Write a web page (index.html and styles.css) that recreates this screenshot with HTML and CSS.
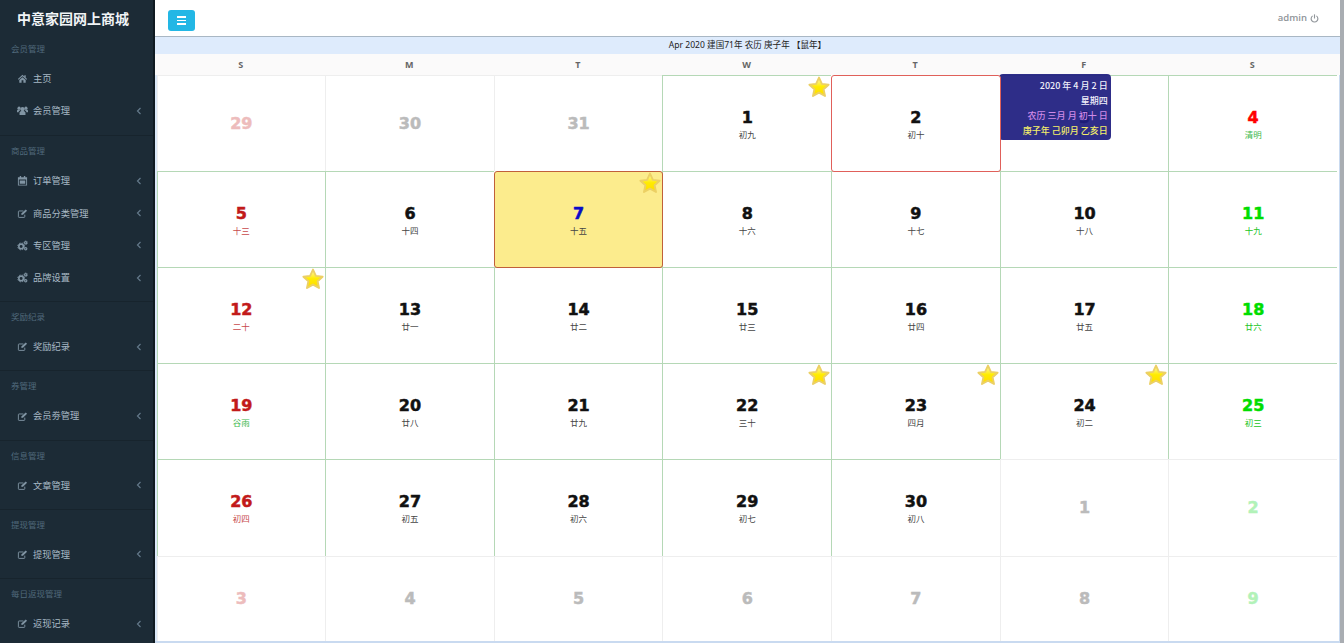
FILE: index.html
```html
<!DOCTYPE html>
<html lang="zh">
<head>
<meta charset="utf-8">
<title>中意家园网上商城</title>
<link rel="stylesheet" href="styles.css">
</head>
<body>
<svg class="defs" width="0" height="0" aria-hidden="true">
  <defs>
    <linearGradient id="gold" x1="0" y1="0" x2="0" y2="1">
      <stop offset="0" stop-color="#fff8b8"/>
      <stop offset="0.5" stop-color="#ffeb00"/>
      <stop offset="1" stop-color="#ffdc00"/>
    </linearGradient>
    <symbol id="i-star" viewBox="0 0 24 24"><path d="M12 2.600l2.900 6.300 6.700.8-5 4.600 1.400 6.700-6-3.400-6 3.400 1.400-6.700-5-4.600 6.700-.8z" fill="url(#gold)" stroke="#ecd064" stroke-width="1.900" stroke-linejoin="round"/></symbol>
    <symbol id="i-home" viewBox="0 0 24 24"><path d="M12 4L2 13l1.500 1.500L12 7l8.500 7.500L22 13l-3-2.700V5h-3v2.600zM5 15.500V21h5v-5h4v5h5v-5.500L12 9.200z" fill="currentColor"/></symbol>
    <symbol id="i-users" viewBox="0 0 24 24"><circle cx="12" cy="9" r="4.500" fill="currentColor"/><circle cx="4.500" cy="7" r="3.500" fill="currentColor"/><circle cx="19.500" cy="7" r="3.500" fill="currentColor"/><path d="M5.500 22v-5c0-3 2.500-4 6.500-4s6.500 1 6.500 4v5zM0 16v-3c0-2 1.500-3 5-3l2 2c-2.500 1-3.500 2-3.500 4zM24 16v-3c0-2-1.500-3-5-3l-2 2c2.500 1 3.500 2 3.500 4z" fill="currentColor"/></symbol>
    <symbol id="i-cal" viewBox="0 0 24 24"><path d="M2 5h20v18H2zM4 10v11h16V10z" fill="currentColor" fill-rule="evenodd"/><path d="M6 2h3v5H6zM15 2h3v5h-3zM6 12h12v7H6z" fill="currentColor"/></symbol>
    <symbol id="i-edit" viewBox="0 0 24 24"><path d="M17 14.500V19a1.500 1.500 0 0 1-1.500 1.500h-11A1.500 1.500 0 0 1 3 19V8a1.500 1.500 0 0 1 1.500-1.500H14" fill="none" stroke="currentColor" stroke-width="2"/><path d="M10 11.500L19 3l3 3-9 8.500-3.500.8z" fill="currentColor"/></symbol>
    <symbol id="i-cogs" viewBox="0 0 24 24"><circle cx="9" cy="14" r="5" fill="none" stroke="currentColor" stroke-width="3.500"/><circle cx="9" cy="14" r="7.500" fill="none" stroke="currentColor" stroke-width="2" stroke-dasharray="3 3"/><circle cx="19" cy="6" r="2.500" fill="none" stroke="currentColor" stroke-width="2.500"/><circle cx="19" cy="6" r="4.200" fill="none" stroke="currentColor" stroke-width="1.500" stroke-dasharray="2 2"/><circle cx="19" cy="19" r="2.500" fill="none" stroke="currentColor" stroke-width="2.500"/></symbol>
    <symbol id="i-left" viewBox="0 0 6 8"><path d="M4.500 1L1.500 4l3 3" fill="none" stroke="currentColor" stroke-width="1.200"/></symbol>
    <symbol id="i-power" viewBox="0 0 12 12"><path d="M3.500 2.500a4.500 4.500 0 1 0 5 0" fill="none" stroke="currentColor" stroke-width="1.500"/><path d="M6 .5v5.500" stroke="currentColor" stroke-width="1.500"/></symbol>
  </defs>
</svg>

<aside class="sidebar">
  <div class="brand">中意家园网上商城</div>
  <nav>
    <section class="group group-first">
      <h4>会员管理</h4>
      <a class="item"><svg class="ico"><use href="#i-home"/></svg><span>主页</span></a>
      <a class="item"><svg class="ico"><use href="#i-users"/></svg><span>会员管理</span><svg class="arrow"><use href="#i-left"/></svg></a>
    </section>
    <section class="group">
      <h4>商品管理</h4>
      <a class="item"><svg class="ico"><use href="#i-cal"/></svg><span>订单管理</span><svg class="arrow"><use href="#i-left"/></svg></a>
      <a class="item"><svg class="ico"><use href="#i-edit"/></svg><span>商品分类管理</span><svg class="arrow"><use href="#i-left"/></svg></a>
      <a class="item"><svg class="ico"><use href="#i-cogs"/></svg><span>专区管理</span><svg class="arrow"><use href="#i-left"/></svg></a>
      <a class="item"><svg class="ico"><use href="#i-cogs"/></svg><span>品牌设置</span><svg class="arrow"><use href="#i-left"/></svg></a>
    </section>
    <section class="group">
      <h4>奖励纪录</h4>
      <a class="item"><svg class="ico"><use href="#i-edit"/></svg><span>奖励纪录</span><svg class="arrow"><use href="#i-left"/></svg></a>
    </section>
    <section class="group">
      <h4>券管理</h4>
      <a class="item"><svg class="ico"><use href="#i-edit"/></svg><span>会员劵管理</span><svg class="arrow"><use href="#i-left"/></svg></a>
    </section>
    <section class="group">
      <h4>信息管理</h4>
      <a class="item"><svg class="ico"><use href="#i-edit"/></svg><span>文章管理</span><svg class="arrow"><use href="#i-left"/></svg></a>
    </section>
    <section class="group">
      <h4>提现管理</h4>
      <a class="item"><svg class="ico"><use href="#i-edit"/></svg><span>提现管理</span><svg class="arrow"><use href="#i-left"/></svg></a>
    </section>
    <section class="group">
      <h4>每日返现管理</h4>
      <a class="item"><svg class="ico"><use href="#i-edit"/></svg><span>返现记录</span><svg class="arrow"><use href="#i-left"/></svg></a>
    </section>
  </nav>
</aside>

<main class="main">
  <header class="topbar">
    <button class="toggle" type="button" aria-label="menu"><i></i><i></i><i></i></button>
    <div class="user"><span>admin</span><svg class="power"><use href="#i-power"/></svg></div>
  </header>
  <div class="calendar">
    <div class="cal-title">Apr 2020 建国71年 农历 庚子年 【鼠年】</div>
    <div class="weekdays"><div>S</div><div>M</div><div>T</div><div>W</div><div>T</div><div>F</div><div>S</div></div>
    <div class="days">
      <div class="day off"><b class="c-offsun">29</b></div>
      <div class="day off"><b>30</b></div>
      <div class="day off"><b>31</b></div>
      <div class="day"><b>1</b><small>初九</small><svg class="star"><use href="#i-star"/></svg></div>
      <div class="day hover"><b>2</b><small>初十</small></div>
      <div class="day"><b>3</b><small>十一</small>
        <div class="tip">
          <p>2020 年 4 月 2 日</p>
          <p>星期四</p>
          <p class="tip-lunar">农历 三月 月 初十 日</p>
          <p class="tip-gz">庚子年 己卯月 乙亥日</p>
        </div>
      </div>
      <div class="day"><b class="c-red">4</b><small class="c-term">清明</small></div>

      <div class="day"><b class="c-sun">5</b><small class="c-sun">十三</small></div>
      <div class="day"><b>6</b><small>十四</small></div>
      <div class="day today"><b>7</b><small>十五</small><svg class="star"><use href="#i-star"/></svg></div>
      <div class="day"><b>8</b><small>十六</small></div>
      <div class="day"><b>9</b><small>十七</small></div>
      <div class="day"><b>10</b><small>十八</small></div>
      <div class="day"><b class="c-sat">11</b><small class="c-sat">十九</small></div>

      <div class="day"><b class="c-sun">12</b><small class="c-sun">二十</small><svg class="star"><use href="#i-star"/></svg></div>
      <div class="day"><b>13</b><small>廿一</small></div>
      <div class="day"><b>14</b><small>廿二</small></div>
      <div class="day"><b>15</b><small>廿三</small></div>
      <div class="day"><b>16</b><small>廿四</small></div>
      <div class="day"><b>17</b><small>廿五</small></div>
      <div class="day"><b class="c-sat">18</b><small class="c-sat">廿六</small></div>

      <div class="day"><b class="c-sun">19</b><small class="c-term">谷雨</small></div>
      <div class="day"><b>20</b><small>廿八</small></div>
      <div class="day"><b>21</b><small>廿九</small></div>
      <div class="day"><b>22</b><small>三十</small><svg class="star"><use href="#i-star"/></svg></div>
      <div class="day"><b>23</b><small>四月</small><svg class="star"><use href="#i-star"/></svg></div>
      <div class="day"><b>24</b><small>初二</small><svg class="star"><use href="#i-star"/></svg></div>
      <div class="day"><b class="c-sat">25</b><small class="c-sat">初三</small></div>

      <div class="day"><b class="c-sun">26</b><small class="c-sun">初四</small></div>
      <div class="day"><b>27</b><small>初五</small></div>
      <div class="day"><b>28</b><small>初六</small></div>
      <div class="day"><b>29</b><small>初七</small></div>
      <div class="day"><b>30</b><small>初八</small></div>
      <div class="day off"><b>1</b></div>
      <div class="day off"><b class="c-offsat">2</b></div>

      <div class="day off"><b class="c-offsun">3</b></div>
      <div class="day off"><b>4</b></div>
      <div class="day off"><b>5</b></div>
      <div class="day off"><b>6</b></div>
      <div class="day off"><b>7</b></div>
      <div class="day off"><b>8</b></div>
      <div class="day off"><b class="c-offsat">9</b></div>
    </div>
  </div>
</main>
</body>
</html>
```
FILE: styles.css
```css
* { box-sizing: border-box; }
html, body { margin: 0; height: 100%; }
body {
  display: flex;
  height: 643px;
  overflow: hidden;
  background: #fff;
  font-family: "Open Sans", "Noto Sans CJK SC", sans-serif;
}
.defs { position: absolute; }

.sidebar {
  flex: 0 0 155px;
  height: 643px;
  overflow: hidden;
  background: #1c2b36;
  border-right: 2px solid #0f1a21;
}
.brand {
  height: 34px;
  padding: 8px 7px 0 0;
  text-align: center;
  font: 700 14px/20px "Noto Sans CJK SC", sans-serif;
  color: #f1f4f6;
}
.group {
  height: 69.2px;
  border-top: 1px solid #17242d;
}
.group:has(.item:nth-of-type(2)) { height: 101.4px; }
.group:has(.item:nth-of-type(4)) { height: 165.9px; }
.group-first { border-top: 0; }
.group h4 {
  margin: 0;
  padding-left: 11px;
  height: 29px;
  font: 400 8.5px/29px "Noto Sans CJK SC", sans-serif;
  color: #50697b;
}
.item {
  display: flex;
  align-items: center;
  height: 32.2px;
  padding: 0 11px 1px 17px;
  font: 400 9.25px/1 "Noto Sans CJK SC", sans-serif;
  color: #a8b9c5;
}
.item span { flex: 1; }
.ico { width: 11px; height: 11px; margin-right: 5px; color: #8195a4; flex: none; }
.arrow { width: 6px; height: 8px; color: #63798a; flex: none; }

.main {
  flex: 1;
  min-width: 0;
  display: flex;
  flex-direction: column;
  height: 643px;
  border-right: 4px solid #a9adb2;
}
.topbar {
  flex: 0 0 37px;
  display: flex;
  align-items: flex-start;
  justify-content: space-between;
  padding: 10px 21px 0 13px;
  background: #fff;
  border-bottom: 1px solid #a9b7c4;
}
.toggle {
  display: flex;
  flex-direction: column;
  align-items: center;
  justify-content: center;
  gap: 2px;
  width: 27px;
  height: 21px;
  padding: 0;
  border: 0;
  border-radius: 3px;
  background: #23b7e5;
}
.toggle i { display: block; width: 9px; height: 1.5px; background: #fff; }
.user {
  display: flex;
  align-items: center;
  gap: 3px;
  margin-top: 1px;
  font-size: 9.5px;
  font-weight: 600;
  line-height: 14px;
  color: #8f9499;
}
.power { width: 9px; height: 9px; }

.calendar {
  flex: 1;
  min-height: 0;
  display: flex;
  flex-direction: column;
  border-bottom: 2px solid #c9daf0;
}
.cal-title {
  flex: 0 0 17px;
  background: #deebfc;
  text-align: center;
  font: 400 8.55px/17px "Noto Sans", "Noto Sans CJK SC", sans-serif;
  color: #222;
}
.weekdays {
  flex: 0 0 21px;
  display: grid;
  grid-template-columns: repeat(7, 1fr);
  padding: 0 3.5px 0 1.5px;
  background: #fbfafa;
  text-align: center;
  font-size: 9px;
  font-weight: 700;
  line-height: 21px;
  color: #666;
}
.days {
  flex: 1;
  min-height: 0;
  display: grid;
  grid-template-columns: repeat(7, 1fr);
  grid-template-rows: 96px 96px 96px 96px 97px 85px;
  margin-left: -0.5px;
  padding-right: 2px;
  border-left: 2px solid #dbe8f8;
  border-right: 1px solid #c9daf0;
}
.day {
  position: relative;
  z-index: 1;
  display: flex;
  flex-direction: column;
  align-items: center;
  justify-content: center;
  border-left: 1px solid #b5d8b6;
  border-top: 1px solid #b5d8b6;
  background: #fff;
}
.day b {
  font: 700 16px/18px "DejaVu Sans", sans-serif;
  -webkit-text-stroke: 0.5px currentColor;
  color: #111;
}
.day small {
  margin-bottom: -2px;
  font: 400 8.5px/14px "Noto Sans CJK SC", sans-serif;
  color: #444;
}
.day.off { z-index: 0; border-color: #eeeeee; }
.day.off b { color: #bbbbbb; }
.day.hover,
.day.today {
  z-index: 2;
  margin: 0 -1px -1px 0;
  border-width: 1px;
  border-style: solid;
  border-radius: 3px;
}
.day.hover { border-color: #e0605a; }
.day.today { background: #fcec8d; border-color: #c0603a; }
.day.today b { color: #0a0ac8; }

.day b.c-sun { color: #c21a1a; }
.day small.c-sun { color: #c8494b; }
.day b.c-red { color: #ff0000; }
.day b.c-sat { color: #00dd00; }
.day small.c-sat { color: #22c422; }
.day small.c-term { color: #3cb84a; }
.day.off b.c-offsun { color: #edbcbc; }
.day.off b.c-offsat { color: #b2f2b8; }

.star {
  position: absolute;
  top: -1px;
  right: 0;
  width: 24px;
  height: 24px;
  z-index: 3;
}
.tip {
  position: absolute;
  z-index: 4;
  top: -2px;
  left: -2px;
  width: 112px;
  height: 66px;
  padding: 4px 3px 0 0;
  border-radius: 4px;
  background: rgba(30, 29, 127, 0.93);
  text-align: right;
  font: 500 9px/15px "Noto Sans CJK SC", sans-serif;
  color: #f0f0fa;
}
.tip p { margin: 0; }
.tip-lunar { color: #cf8ae6; }
.tip-gz { color: #f4ee6a; }
```
